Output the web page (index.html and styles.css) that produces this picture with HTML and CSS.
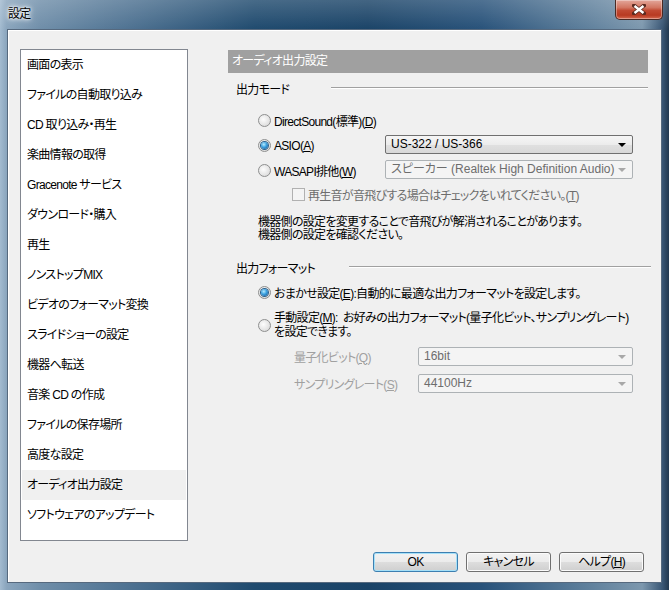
FILE: index.html
```html
<!DOCTYPE html>
<html lang="ja">
<head>
  <meta charset="UTF-8">
  <title>設定</title>
  <link rel="stylesheet" href="styles.css">
</head>
<body>
<div class="window">
  <div class="titlebar">
    <span class="title">設定</span>
    <div class="close">
      <svg width="14" height="11" viewBox="0 0 14 11">
        <path d="M2 1.5 L12 9.5 M12 1.5 L2 9.5" stroke="#5a2a20" stroke-width="4" stroke-linecap="square"/>
        <path d="M2.5 2 L11.5 9 M11.5 2 L2.5 9" stroke="#ffffff" stroke-width="2.4"/>
      </svg>
    </div>
  </div>

  <div class="client">
    <div class="main">
      <!-- left menu -->
      <ul class="nav">
        <li>画面の表示</li>
        <li>ファイルの自動取り込み</li>
        <li>CD 取り込み・再生</li>
        <li>楽曲情報の取得</li>
        <li>Gracenote サービス</li>
        <li>ダウンロード・購入</li>
        <li>再生</li>
        <li>ノンストップMIX</li>
        <li>ビデオのフォーマット変換</li>
        <li>スライドショーの設定</li>
        <li>機器へ転送</li>
        <li>音楽 CD の作成</li>
        <li>ファイルの保存場所</li>
        <li>高度な設定</li>
        <li class="active">オーディオ出力設定</li>
        <li>ソフトウェアのアップデート</li>
      </ul>

      <!-- right page -->
      <div class="panel">
        <div class="panel-head">オーディオ出力設定</div>

        <div class="group-title mode"><span class="gt">出力モード</span><span class="rule"></span></div>

        <div class="modes">
          <div class="row">
            <span class="radio"></span><span class="lbl">DirectSound(標準)(<u>D</u>)</span>
          </div>
          <div class="row">
            <div class="mode-l"><span class="radio on"></span><span class="lbl">ASIO(<u>A</u>)</span></div>
            <div class="combo wide">US-322 / US-366<span class="arrow"></span></div>
          </div>
          <div class="row">
            <div class="mode-l"><span class="radio"></span><span class="lbl">WASAPI排他(<u>W</u>)</span></div>
            <div class="combo wide off">スピーカー (Realtek High Definition Audio)<span class="arrow"></span></div>
          </div>
        </div>

        <div class="check-row">
          <span class="check"></span><span class="lbl dim">再生音が音飛びする場合はチェックをいれてください。(<u>T</u>)</span>
        </div>

        <p class="note">機器側の設定を変更することで音飛びが解消されることがあります。<br>機器側の設定を確認ください。</p>

        <div class="group-title fmt"><span class="gt">出力フォーマット</span><span class="rule"></span></div>

        <div class="row auto">
          <span class="radio on"></span><span class="lbl">おまかせ設定(<u>E</u>):自動的に最適な出力フォーマットを設定します。</span>
        </div>
        <div class="row manual">
          <span class="radio"></span><span class="lbl two">手動設定(<u>M</u>):&nbsp; お好みの出力フォーマット(量子化ビット、サンプリングレート)<br>を設定できます。</span>
        </div>

        <div class="sub">
          <div class="sub-row">
            <span class="sub-l">量子化ビット(<u>Q</u>)</span>
            <div class="combo narrow off">16bit<span class="arrow"></span></div>
          </div>
          <div class="sub-row">
            <span class="sub-l">サンプリングレート(<u>S</u>)</span>
            <div class="combo narrow off">44100Hz<span class="arrow"></span></div>
          </div>
        </div>
      </div>
    </div>

    <div class="buttons">
      <div class="btn default">OK</div>
      <div class="btn">キャンセル</div>
      <div class="btn">ヘルプ(<u>H</u>)</div>
    </div>
  </div>
</div>
</body>
</html>
```

FILE: styles.css
```css
* {
  box-sizing: border-box;
}
body {
  margin: 0;
  width: 669px;
  height: 590px;
  overflow: hidden;
  font-family: "Liberation Sans", "Noto Sans CJK JP", sans-serif;
  font-size: 12px;
  font-feature-settings: "palt";
  letter-spacing: -0.7px;
  color: #000;
}
.window {
  width: 669px;
  height: 590px;
  padding: 0 7px 7px 7px;
  display: flex;
  flex-direction: column;
  background:
    linear-gradient(to bottom, rgba(255,255,255,0.18), rgba(255,255,255,0) 30px),
    linear-gradient(to right, #a3bbd0 0%, #8aa5bd 1%, #6f8ea9 6%, #4c7090 20%, #1f4a6e 38%, #1a4367 55%, #28527a 72%, #5f809c 88%, #7d98ae 96%, #3a5775 99%, #22384f 100%);
}

/* title bar */
.titlebar {
  height: 29px;
  display: flex;
  align-items: flex-start;
}
.title {
  margin-top: 6px;
  margin-left: 1px;
  line-height: 16px;
  text-shadow: 0 0 6px #fff, 0 0 4px #fff, 0 0 2px #fff;
}
.close {
  margin-left: auto;
  margin-right: -1px;
  width: 48px;
  height: 20px;
  border: 1px solid #4a2a24;
  border-top: none;
  border-radius: 0 0 5px 5px;
  background: linear-gradient(to bottom, #e3a79b 0%, #d27561 40%, #c14a33 55%, #b83a22 80%, #d56a50 100%);
  box-shadow: inset 0 0 0 1px rgba(255,255,255,0.35);
  display: flex;
  align-items: center;
  justify-content: center;
}

/* client area */
.client {
  flex: 1;
  background: #f0f0f0;
  border: 1px solid #56697e;
  box-shadow: inset 1px 1px 0 #ffffff;
  display: flex;
  flex-direction: column;
  padding: 19px 0 0 12px;
}
.main {
  display: flex;
  gap: 40px;
}

/* left menu */
.nav {
  flex: none;
  list-style: none;
  margin: 0;
  padding: 0 1px;
  width: 168px;
  height: 492px;
  background: #fff;
  border: 1px solid #828790;
}
.nav li {
  height: 30px;
  line-height: 30px;
  padding-left: 5px;
  white-space: nowrap;
}
.nav li.active {
  background: #f0f0f0;
}

/* right page */
.panel {
  flex: none;
  width: 424px;
  padding-top: 1px;
}
.panel-head {
  height: 23px;
  line-height: 23px;
  background: #a0a0a0;
  color: #fff;
  padding-left: 4px;
  width: 420px;
}
.group-title {
  display: flex;
  align-items: center;
  height: 16px;
  padding-left: 8px;
}
.group-title .rule {
  flex: 1;
  height: 1px;
  background: #a0a0a0;
  border-bottom: 1px solid #fff;
  box-sizing: content-box;
}
.group-title.mode {
  margin-top: 7px;
  width: 420px;
}
.group-title.mode .gt {
  width: 95px;
}
.group-title.fmt {
  margin-top: 17px;
  width: 423px;
}
.group-title.fmt .gt {
  width: 113px;
}

.modes {
  margin-top: 12px;
  padding-left: 30px;
}
.row {
  display: flex;
  align-items: center;
  height: 25px;
}
.mode-l {
  display: flex;
  align-items: center;
  width: 127px;
}
.lbl {
  margin-left: 3px;
  white-space: nowrap;
}
.lbl.dim {
  color: #6d6d6d;
}

.radio {
  position: relative;
  width: 13px;
  height: 13px;
  flex: none;
  border-radius: 50%;
  border: 1px solid #8e8f8f;
  background: radial-gradient(circle at 40% 40%, #fdfdfd 0%, #e4e4e4 60%, #cfcfcf 100%);
}
.radio.on::after {
  content: "";
  position: absolute;
  left: 2px;
  top: 2px;
  width: 7px;
  height: 7px;
  border-radius: 50%;
  background: radial-gradient(circle at 40% 35%, #b8ecff 0%, #3aa0e0 45%, #14508c 100%);
  box-shadow: 0 0 0 1px #2c5f8a;
}

.combo {
  position: relative;
  height: 19px;
  line-height: 17px;
  padding-left: 5px;
  border: 1px solid #707070;
  border-radius: 2px;
  background: linear-gradient(to bottom, #f6f6f6 0%, #ececec 50%, #e0e0e0 51%, #d8d8d8 100%);
  white-space: nowrap;
  overflow: hidden;
  letter-spacing: 0;
}
.combo.wide {
  width: 248px;
  margin-top: -3px;
}
.combo.narrow {
  width: 215px;
}
.combo.off {
  border-color: #adb2b5;
  background: #f4f4f4;
  color: #6d6d6d;
}
.combo .arrow {
  position: absolute;
  right: 6px;
  top: 7px;
  border-left: 4px solid transparent;
  border-right: 4px solid transparent;
  border-top: 4px solid #000;
}
.combo.off .arrow {
  border-top-color: #a8a8a8;
}

.check-row {
  display: flex;
  align-items: center;
  height: 20px;
  margin-top: 1px;
  padding-left: 64px;
}
.check {
  width: 13px;
  height: 13px;
  border: 1px solid #b1b1b1;
  background: #f4f4f4;
}

.note {
  margin: 12px 0 0 30px;
  line-height: 13px;
}

.row.auto {
  margin-top: 7px;
  height: 20px;
  padding-left: 30px;
}
.row.manual {
  margin-top: 9px;
  height: 28px;
  padding-left: 30px;
}
.lbl.two {
  line-height: 14px;
}

.sub {
  margin-top: 7px;
  padding-left: 66px;
}
.sub-row {
  display: flex;
  align-items: center;
  height: 20px;
  margin-bottom: 7px;
}
.sub-l {
  width: 124px;
  color: #a0a0a0;
  white-space: nowrap;
}

/* bottom buttons */
.buttons {
  display: flex;
  justify-content: flex-end;
  gap: 8px;
  margin-top: 11px;
  padding-right: 17px;
}
.btn {
  width: 85px;
  height: 20px;
  line-height: 18px;
  text-align: center;
  border: 1px solid #707070;
  border-radius: 3px;
  background: linear-gradient(to bottom, #f2f2f2 0%, #ebebeb 50%, #dddddd 51%, #cfcfcf 100%);
  box-shadow: inset 0 0 0 1px #fbfbfb;
}
.btn.default {
  border-color: #3c7fb1;
  box-shadow: inset 0 0 0 1px #a5e0f8;
}
```
